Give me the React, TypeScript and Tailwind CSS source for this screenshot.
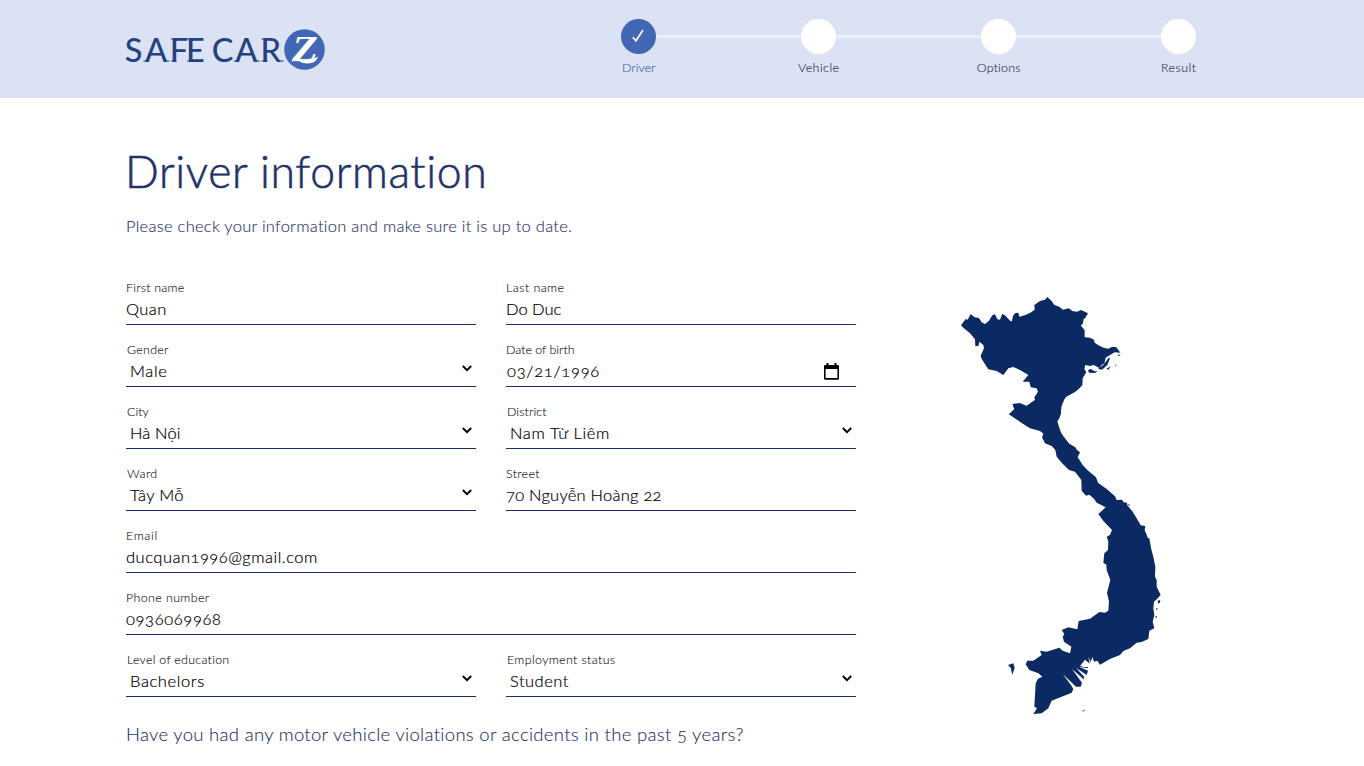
import type { ReactNode } from "react";

function Step({ label, track, active }: { label: string; track: string; active?: boolean }) {
  return (
    <div className="flex w-[60px] flex-col items-center">
      <div
        className={
          active
            ? "flex h-[35px] w-[35px] items-center justify-center rounded-full bg-[#4267b5]"
            : "h-[35px] w-[35px] rounded-full bg-white"
        }
      >
        {active && (
          <svg className="-mt-[3px] h-[13px] w-[12px]" viewBox="0 0 12 13" fill="none" stroke="#fff" strokeWidth="1.7">
            <path d="M.8 8.2 L3.9 11.8 L11 1" />
          </svg>
        )}
      </div>
      <span
        className={`mt-[5px] ml-[1.5px] whitespace-nowrap text-[12.4px] leading-[18px] [-webkit-text-stroke:0.15px] ${track} ${
          active ? "text-[#4267b5]" : "text-[#2f3c60]"
        }`}
      >
        {label}
      </span>
    </div>
  );
}

const Connector = () => <div className="-mx-[12.5px] mt-[16px] h-[3px] w-[145px] bg-[#ecf0f9]" />;

function Field({
  label,
  value,
  lt,
  vt,
  kind,
  wide,
}: {
  label: string;
  value: string;
  lt: string;
  vt: string;
  kind?: "select" | "date";
  wide?: boolean;
}) {
  const pad = kind === "select" ? "pl-[4px]" : kind === "date" ? "pl-px" : "";
  return (
    <div className={`flex h-[50px] flex-col border-b border-[#1c2f6b] ${wide ? "col-span-2" : ""}`}>
      <div
        className={`h-[20px] text-[12.4px] leading-[26px] text-[#111] [-webkit-text-stroke:0.1px] ${lt} ${
          kind === "select" ? "pl-px" : ""
        }`}
      >
        {label}
      </div>
      <div className={`flex flex-1 items-center justify-between pb-[2px] text-black ${pad}`}>
        <span className={`text-[16.5px] leading-[20px] oldstyle-nums [-webkit-text-stroke:0.2px] ${vt}`}>{value}</span>
        {kind === "select" && (
          <svg className="mr-[4px] -mt-[4px] h-[7px] w-[10px]" viewBox="0 0 10 7" fill="none" stroke="#000" strokeWidth="1.9">
            <path d="M.8 1 L5 5.2 L9.2 1" />
          </svg>
        )}
        {kind === "date" && (
          <svg className="mr-[17px] mt-px h-[17px] w-[15px]" viewBox="0 0 15 17">
            <path d="M2.5 0h2v2h6V0h2v2h1.2Q15 2 15 3.3V15.4Q15 16.7 13.7 16.7H1.3Q0 16.7 0 15.4V3.3Q0 2 1.3 2h1.2z M1.6 6V15.1H13.4V6z" fillRule="evenodd" />
          </svg>
        )}
      </div>
    </div>
  );
}

function Logo() {
  return (
    <svg className="h-[70px] w-[230px]" viewBox="0 0 230 70">
      <text
        y="46.6"
        x="14.8 35 59.8 76 92 101.8 125.3 150.6"
        fill="#24427f"
        fontFamily="Lato"
        fontWeight="500"
        fontSize="32.5"
        className="whitespace-pre"
      >
        SAFE CAR
      </text>
      <path
        d="M33.4 46h5.5 M53.5 46h6 M61 24h3 M61 46h5.5 M77 24h3 M77 46h3 M123.7 46h5.5 M143.8 46h6 M151.5 24h3 M151.5 46h6 M167 46h6.5"
        stroke="#24427f"
        strokeWidth="1.2"
      />
      <circle cx="194.5" cy="34.5" r="20.3" fill="#4267b5" />
      <text x="182" y="46.4" fill="#fff" fontFamily="Liberation Serif" fontStyle="italic" fontWeight="700" fontSize="36" textLength="26" lengthAdjust="spacingAndGlyphs">
        Z
      </text>
      <path d="M181 46.6Q187 42.6 193 44.8T208 41.5Q206.5 47.6 200 48.3T189 46.2Q185 45.6 181 46.6z" fill="#fff" />
    </svg>
  );
}

function VietnamMap() {
  return (
    <svg className="h-[440px] w-[230px]" viewBox="0 0 690 1320" fill="#0b2a63">
      <path d="M63 121L77 102 83 104 92 87 104 97 117 99 125 112 135 117 147 107 157 91 165 88 172 103 180 104 187 86 196 92 212 109 216 108 219 92 226 84 235 83 238 95 254 91 271 83 284 74 283 60 300 48 315 44 322 36 334 47 343 60 358 65 369 74 386 70 397 78 411 80 423 75 444 85 436 98 431 103 428 117 422 121 434 136 434 157 450 158 462 164 464 173 478 182 491 188 505 191 517 185 529 187 541 203 524 202 510 210 497 218 493 236 487 238 478 249 461 240 450 243 436 240 433 252 439 262 428 280 427 301 416 312 405 321 390 329 379 335 370 347 361 368 363 385 352 409 357 425 365 450 328 460 300 438 270 430 245 414 207 388 223 373 218 357 240 355 260 363 285 345 283 337 294 320 290 310 272 307 268 290 248 290 265 270 240 255 220 246 205 250 190 270 170 258 145 253 125 222 122 212 132 190 130 180 118 170 115 183 106 184 105 163 90 145 70 128z M444 255l9 -3 10 7 10 -1 -8 6 -18-1z M474 252l18-14 14-20 4 2-8 20-16 14z M499 252l12-8-5 10z M526 240l4-2-3 7z M532 209h10l-5 5z" />
      <path transform="translate(150 345)" d="M222 0L214 20 213 40 208 55 198 68 200 80 208 90 221 110 238 131 256 142 261 150 270 157 263 172 267 178 278 195 292 210 318 232 324 248 349 266 375 289 380 300 396 299 401 307 411 308 412 316 428 335 443 360 452 376 466 378 464 390 469 402 480 430 482 450H356L356 425 350 411 360 404 366 390 340 363 325 342 347 322 320 308 312 296 298 284 288 287 275 272 274 240 255 215 237 210 215 188 200 170 196 150 185 138 165 130 156 112 162 97 120 80 90 60 57 43 73 28 68 12 90 10 110 18 135 0z M413 315l5-3 1 6z" />
      <path transform="translate(150 765)" d="M356 -5H478L483 25 490 50 496 80 495 110 500 120 500 140 512 165 500 178 492 185 490 205 493 225 488 245 493 265 478 272 475 297 455 306 440 308 420 325 400 333 390 345 360 357 330 374 322 362 312 365 307 351 302 367 295 350 299 371 285 359 270 378 283 381 293 381 295 385 267 380 294 392 290 405 258 383 283 411 281 418 246 387 276 428 272 440 258 440 218 402 243 435 250 447 245 458 215 470 185 482 175 505 155 520 130 522 141 505 133 500 137 430 144 416 157 410 145 400 118 390 107 373 112 362 130 362 155 345 150 332 170 335 208 323 218 332 240 340 244 320 222 305 218 290 223 282 215 270 235 262 262 268 266 243 300 236 328 216 345 218 355 212 357 185 351 158 361 120 350 90 349 74 340 68 343 40 354 30z M54 375L70 370 74 384 67 404 62 383z M276 515l8-7-1 5z M503 182l8-2-2 9-5 1z M497 206l6-3-2 7z M495 230l6-3-2 8z" />
    </svg>
  );
}

function Copy({ children, className }: { children: ReactNode; className: string }) {
  return <p className={`whitespace-nowrap oldstyle-nums text-[#1c2f5f] [-webkit-text-stroke:0.1px] ${className}`}>{children}</p>;
}

export default function App() {
  return (
    <div className="h-[766px] overflow-hidden bg-white font-['Lato','Open_Sans',sans-serif] font-light">
      <header className="flex h-[98px] items-start justify-between bg-[#dbe2f3] pr-[156px] pl-[110px]">
        <div className="pt-[15px]">
          <Logo />
        </div>
        <nav className="flex items-start pt-[19px]">
          <Step label="Driver" track="tracking-[0px]" active />
          <Connector />
          <Step label="Vehicle" track="tracking-[0.45px]" />
          <Connector />
          <Step label="Options" track="tracking-[0.2px]" />
          <Connector />
          <Step label="Result" track="tracking-[0.5px]" />
        </nav>
      </header>
      <main className="flex pl-[126px]">
        <section className="w-[730px] shrink-0 pt-[43px]">
          <h1 className="-ml-px whitespace-nowrap text-[44.5px] leading-[60px] tracking-[0.61px] text-[#1f336b] [-webkit-text-stroke:0.6px]">
            Driver information
          </h1>
          <Copy className="mt-[13px] text-[16.5px] leading-[24px] tracking-[0.26px]">
            Please check your information and make sure it is up to date.
          </Copy>
          <form className="mt-[37px] grid grid-cols-2 gap-x-[30px] gap-y-[12px]">
            <Field label="First name" value="Quan" lt="tracking-[0.23px]" vt="tracking-[0.4px]" />
            <Field label="Last name" value="Do Duc" lt="tracking-[0.45px]" vt="tracking-[0px]" />
            <Field kind="select" label="Gender" value="Male" lt="tracking-[0.28px]" vt="tracking-[0.6px]" />
            <Field kind="date" label="Date of birth" value="03/21/1996" lt="tracking-[0.01px]" vt="tracking-[0.73px]" />
            <Field kind="select" label="City" value="Hà Nội" lt="tracking-[0.03px]" vt="tracking-[0.16px]" />
            <Field kind="select" label="District" value="Nam Từ Liêm" lt="tracking-[0.1px]" vt="tracking-[0.64px]" />
            <Field kind="select" label="Ward" value="Tây Mỗ" lt="tracking-[0.45px]" vt="tracking-[0.3px]" />
            <Field label="Street" value="70 Nguyễn Hoàng 22" lt="tracking-[0.33px]" vt="tracking-[0.24px]" />
            <Field wide label="Email" value="ducquan1996@gmail.com" lt="tracking-[0.7px]" vt="tracking-[0.5px]" />
            <Field wide label="Phone number" value="0936069968" lt="tracking-[0.41px]" vt="tracking-[0.65px]" />
            <Field kind="select" label="Level of education" value="Bachelors" lt="tracking-[0.28px]" vt="tracking-[0.6px]" />
            <Field kind="select" label="Employment status" value="Student" lt="tracking-[0.38px]" vt="tracking-[0.48px]" />
          </form>
          <Copy className="mt-[24px] text-[18.5px] leading-[27px] tracking-[0.31px]">
            Have you had any motor vehicle violations or accidents in the past 5 years?
          </Copy>
        </section>
        <aside className="pt-[187px] pl-[84px]">
          <VietnamMap />
        </aside>
      </main>
    </div>
  );
}
